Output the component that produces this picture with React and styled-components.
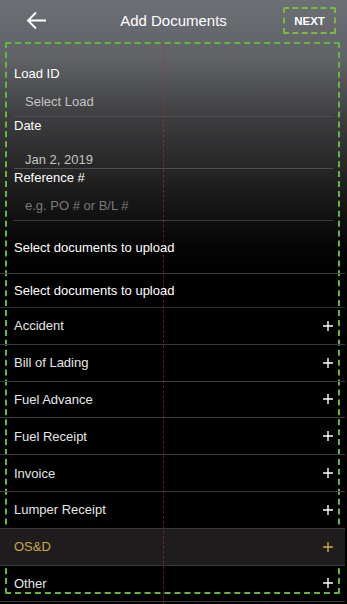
import React from "react";
import styled, { createGlobalStyle } from "styled-components";

const GlobalStyle = createGlobalStyle`
  html, body {
    margin: 0;
    padding: 0;
    background: #000;
  }
  body {
    font-family: "Liberation Sans", Arial, sans-serif;
    -webkit-font-smoothing: antialiased;
  }
`;

const Screen = styled.div`
  width: 347px;
  height: 604px;
  overflow: hidden;
  position: relative;
  color: #fff;
  background: linear-gradient(
    180deg,
    #6c6f74 0px,
    #5f6165 60px,
    #3c3c3e 120px,
    #1c1c1d 190px,
    #050505 245px,
    #000 275px
  );
`;

const Header = styled.div`
  height: 40px;
  display: flex;
  align-items: center;
  justify-content: space-between;
  padding: 0 11px 0 26px;
  position: relative;
`;

const BackButton = styled.button`
  background: none;
  border: none;
  padding: 0;
  width: 22px;
  height: 22px;
  display: flex;
  align-items: center;
  cursor: pointer;
`;

const Title = styled.div`
  position: absolute;
  left: 0;
  right: 0;
  text-align: center;
  font-size: 15px;
  color: #fff;
  pointer-events: none;
`;

const NextButton = styled.button`
  width: 53px;
  height: 27px;
  margin-top: 1px;
  border: 2px dashed #7fb83e;
  border-radius: 2px;
  background: transparent;
  color: #fff;
  font-family: "Liberation Sans", Arial, sans-serif;
  font-weight: 700;
  font-size: 11.5px;
  padding: 0;
  cursor: pointer;
`;

const Content = styled.div`
  margin: 2px 7px 0 5px;
  height: 552px;
  border: 2px dashed #62b83c;
  border-radius: 2px;
  padding: 21px 5px 0 7px;
  box-sizing: border-box;
`;

const Field = styled.div`
  height: 51px;
  border-bottom: 1px solid ${(p) => (p.$last ? "#3a3a3a" : "#4d4d4f")};
  display: flex;
  flex-direction: column;
`;

const Label = styled.div`
  font-size: 13px;
  line-height: 18px;
  color: #fff;
`;

const Value = styled.div`
  font-size: 13px;
  line-height: 18px;
  margin-top: ${(p) => p.$gap}px;
  padding-left: 11px;
  color: ${(p) => (p.$placeholder ? "#7a7a7a" : "#c4c4c4")};
`;

const SectionTitle = styled.div`
  height: 52px;
  display: flex;
  align-items: center;
  font-size: 13px;
  color: #fff;
  margin: 0 -12px 0 -14px;
  padding: 0 14px;
  border-bottom: 1px solid #3c3c3c;
`;

const ListHeader = styled.div`
  height: 33px;
  display: flex;
  align-items: center;
  font-size: 13px;
  color: #fff;
  margin: 0 -12px 0 -14px;
  padding: 0 14px;
  border-bottom: 1px solid #2e2e2e;
`;

const Row = styled.div`
  height: 35.8px;
  display: flex;
  align-items: center;
  justify-content: space-between;
  margin: 0 -12px 0 -14px;
  padding: 0 12px 0 14px;
  border-bottom: 1px solid #3a3a3a;
  font-size: 13px;
  color: ${(p) => (p.$active ? "#c6a84a" : "#e6e6e6")};
  background: ${(p) => (p.$active ? "#1e1c1c" : "transparent")};
`;

const CenterGuide = styled.div`
  position: absolute;
  left: 163px;
  top: 44px;
  bottom: 0;
  width: 0;
  border-left: 1px dashed rgba(190, 40, 60, 0.55);
  pointer-events: none;
`;

const Plus = ({ color }) => (
  <svg width="10" height="10" viewBox="0 0 10 10">
    <path d="M5 0v10M0 5h10" stroke={color} strokeWidth="1.4" />
  </svg>
);

const docs = [
  "Accident",
  "Bill of Lading",
  "Fuel Advance",
  "Fuel Receipt",
  "Invoice",
  "Lumper Receipt",
  "OS&D",
  "Other",
];

export default function App() {
  return (
    <>
      <GlobalStyle />
      <Screen>
        <Header>
          <BackButton aria-label="Back">
            <svg width="21" height="19" viewBox="0 0 21 19">
              <path
                d="M20 9.5H2M10 1.5L2 9.5l8 8"
                stroke="#fff"
                strokeWidth="1.8"
                fill="none"
              />
            </svg>
          </BackButton>
          <Title>Add Documents</Title>
          <NextButton>NEXT</NextButton>
        </Header>
        <Content>
          <Field>
            <Label>Load ID</Label>
            <Value $gap={10}>Select Load</Value>
          </Field>
          <Field>
            <Label>Date</Label>
            <Value $gap={16}>Jan 2, 2019</Value>
          </Field>
          <Field $last>
            <Label>Reference #</Label>
            <Value $gap={10} $placeholder>
              e.g. PO # or B/L #
            </Value>
          </Field>
          <SectionTitle>Select documents to upload</SectionTitle>
          <ListHeader>Select documents to upload</ListHeader>
          {docs.map((d) => (
            <Row key={d} $active={d === "OS&D"}>
              <span>{d}</span>
              <Plus color={d === "OS&D" ? "#c6a84a" : "#fff"} />
            </Row>
          ))}
        </Content>
        <CenterGuide />
      </Screen>
    </>
  );
}
